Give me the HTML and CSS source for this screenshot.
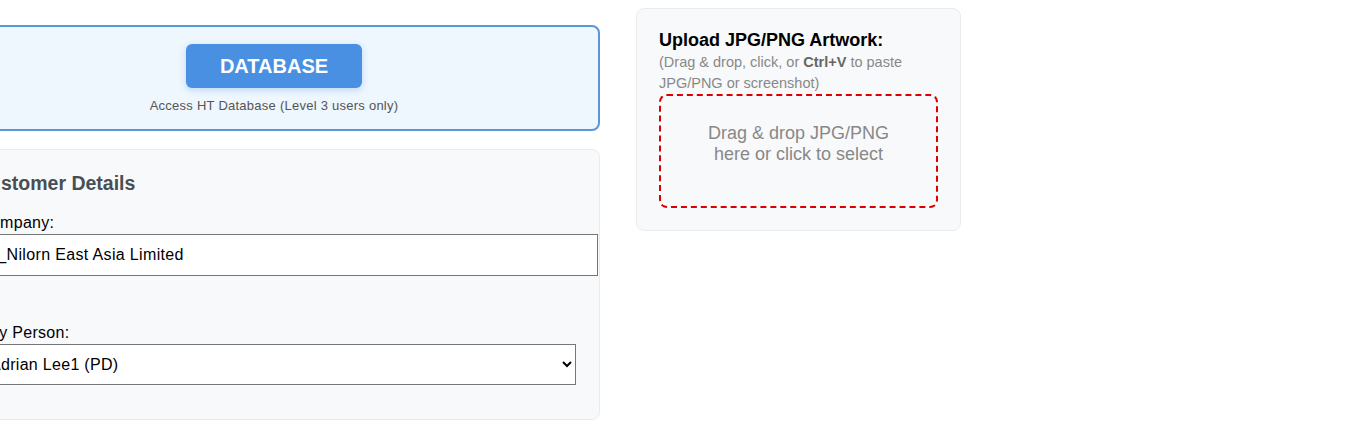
FILE: index.html
```html
<!DOCTYPE html>
<html lang="en">
<head>
<meta charset="utf-8">
<title>Order Form</title>
<link rel="stylesheet" href="styles.css">
</head>
<body>
<div class="page">
  <div class="left-col">
    <div class="db-box">
      <button class="db-button" type="button">DATABASE</button>
      <div class="db-caption">Access HT Database (Level 3 users only)</div>
    </div>
    <div class="card customer-card">
      <h3 class="card-title">Customer Details</h3>
      <div class="form-group form-group-wide">
        <label class="field-label">Company:</label>
        <input class="text-input" type="text" value="1_Nilorn East Asia Limited">
      </div>
      <div class="form-group">
        <label class="field-label">Key Person:</label>
        <select class="select-input">
          <option>Adrian Lee1 (PD)</option>
        </select>
      </div>
    </div>
  </div>
  <div class="upload-card">
    <div class="upload-title">Upload JPG/PNG Artwork:</div>
    <div class="upload-hint">(Drag &amp; drop, click, or <b>Ctrl+V</b> to paste JPG/PNG or screenshot)</div>
    <div class="drop-zone">Drag &amp; drop JPG/PNG here or click to select</div>
  </div>
</div>
</body>
</html>
```
FILE: styles.css
```css
html, body {
  background: #ffffff;
}
body {
  margin: 8px 0 0 0;
  font-family: "Liberation Sans", Arial, sans-serif;
  color: #000;
  overflow: hidden;
}
.page {
  display: flex;
  align-items: flex-start;
  gap: 36px;
  margin-left: -52px;
}
.left-col {
  width: 652px;
  flex: none;
  margin-top: 17px;
}
.db-box {
  background: #eef6fe;
  border: 2px solid #5a97d8;
  border-radius: 8px;
  padding: 17px 20px 16px 20px;
  text-align: center;
}
.db-button {
  display: block;
  margin: 0 auto;
  background: #4a90e2;
  color: #ffffff;
  border: none;
  border-radius: 6px;
  font-family: "Liberation Sans", Arial, sans-serif;
  font-weight: bold;
  font-size: 20px;
  line-height: 24px;
  padding: 10px 34px;
  box-shadow: 0 2px 6px rgba(74, 144, 226, 0.3);
  cursor: pointer;
}
.db-caption {
  margin-top: 10px;
  font-size: 13px;
  line-height: 15px;
  letter-spacing: 0.25px;
  color: #555555;
}
.card {
  background: #f8f9fa;
  border: 1px solid #e9ecef;
  border-radius: 8px;
}
.customer-card {
  margin-top: 18px;
  padding: 21px 23px 19px 26px;
}
.card-title {
  margin: 0 0 19px 0;
  font-size: 19.5px;
  line-height: 24px;
  font-weight: bold;
  color: #484e55;
}
.form-group {
  margin-bottom: 15px;
}
.form-group-wide {
  margin-bottom: 48px;
}
.field-label {
  display: block;
  margin: 0 0 2px 4px;
  font-size: 16px;
  line-height: 18px;
  letter-spacing: 0.3px;
}
.text-input {
  display: block;
  width: 100%;
  padding: 11px 8px 11px 12px;
  border: 1px solid #767676;
  font-family: "Liberation Sans", Arial, sans-serif;
  font-size: 16px;
  line-height: 18px;
  letter-spacing: 0.35px;
  background: #ffffff;
  color: #000;
}
.select-input {
  display: block;
  width: 100%;
  height: 41px;
  padding: 0 10px;
  border: 1px solid #767676;
  border-radius: 0;
  font-family: "Liberation Sans", Arial, sans-serif;
  font-size: 16px;
  letter-spacing: 0.3px;
  background: #ffffff;
  color: #000;
}
.upload-card {
  flex: none;
  width: 325px;
  box-sizing: border-box;
  background: #f8f9fa;
  border: 1px solid #e9ecef;
  border-radius: 8px;
  padding: 21px 22px 22px 22px;
}
.upload-title {
  font-size: 18px;
  line-height: 21px;
  font-weight: bold;
  color: #000;
}
.upload-hint {
  margin-top: 1px;
  font-size: 14.5px;
  line-height: 21px;
  color: #888888;
}
.upload-hint b {
  color: #666666;
}
.drop-zone {
  border: 2px dashed #dd0000;
  border-radius: 8px;
  padding: 27px 28px 41px 28px;
  text-align: center;
  font-size: 18px;
  line-height: 21px;
  color: #888888;
  cursor: pointer;
}
```
